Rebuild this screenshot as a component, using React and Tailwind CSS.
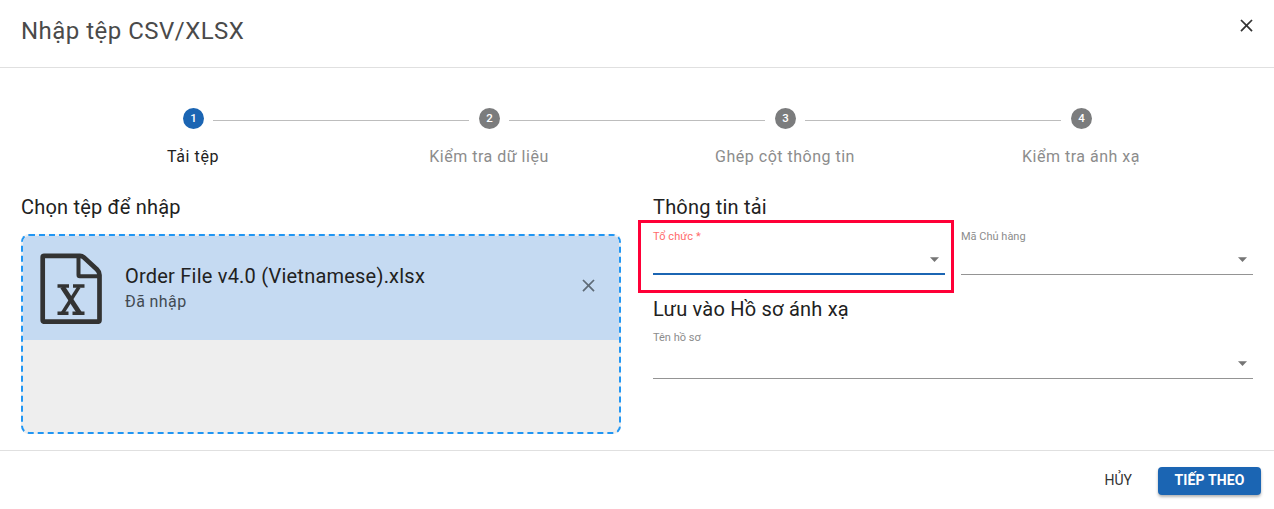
const steps = ['Tải tệp', 'Kiểm tra dữ liệu', 'Ghép cột thông tin', 'Kiểm tra ánh xạ'];

function CloseIcon({ className }) {
  return (
    <svg viewBox="0 0 24 24" className={className} fill="currentColor" aria-hidden="true">
      <path d="M19 6.41 17.59 5 12 10.59 6.41 5 5 6.41 10.59 12 5 17.59 6.41 19 12 13.41 17.59 19 19 17.59 13.41 12z" />
    </svg>
  );
}

function FileIcon() {
  return (
    <svg viewBox="0 0 62 71" className="h-[71px] w-[62px] shrink-0" fill="none" stroke="#333333" aria-hidden="true">
      <path d="M4 2.800H40Q42 2.800 44 4.500L57 16.500Q59.500 19 59.500 22V67Q59.500 68.700 58 68.700H4Q2.700 68.700 2.700 67V4Q2.700 2.800 4 2.800Z" strokeWidth="4.700" />
      <path d="M38.500 3V22Q38.500 23.300 39.800 23.300H59" strokeWidth="4" />
      <path d="M22.500 34 39.500 60" strokeWidth="5" />
      <path d="M39 34 22.500 60" strokeWidth="3.500" />
      <path d="M17.500 33H29M33 33H44.500M17.500 60.300H28.500M32.500 60.300H44.500" strokeWidth="3.500" />
    </svg>
  );
}

function Step({ number, label, active }) {
  return (
    <div className="flex w-[296px] flex-col items-center">
      <div className="flex h-[21px] w-full">
        <div className={`mt-3 mr-[10px] h-px flex-1 ${number === 1 ? '' : 'bg-[#bdbdbd]'}`} />
        <div
          className={`flex size-[21px] shrink-0 items-center justify-center rounded-full text-[11.500px] leading-none font-medium text-white ${active ? 'bg-[#1b65b3]' : 'bg-[#7b7c7d]'}`}
        >
          {number}
        </div>
        <div className={`mt-3 ml-[9px] h-px flex-1 ${number === 4 ? '' : 'bg-[#bdbdbd]'}`} />
      </div>
      <div
        className={`mt-4 text-base leading-6 whitespace-nowrap ${active ? 'font-[430] tracking-[0.600px] text-[#212121]' : 'tracking-[0.500px] text-[#8c8c8c]'}`}
      >
        {label}
      </div>
    </div>
  );
}

function Select({ label, active, className }) {
  return (
    <div className={`flex flex-col ${className}`}>
      <div className={`h-4 text-[11px] leading-4 ${active ? 'tracking-[0.100px] text-[#ff6b6b]' : 'text-[#8c8c8c]'}`}>{label}</div>
      <div
        className={`flex flex-1 items-end justify-end pr-[6px] ${active ? 'border-b-2 border-[#1b65b3] pb-[11px]' : 'border-b border-[#949494] pb-[12px]'}`}
      >
        <svg viewBox="0 0 9 5" className="h-[5px] w-[9px]" fill="#757575" aria-hidden="true">
          <path d="M0 .3h9L4.500 4.900z" />
        </svg>
      </div>
    </div>
  );
}

export default function App() {
  return (
    <div className="flex h-[509px] w-[1274px] flex-col overflow-hidden bg-white font-['Roboto',sans-serif] text-[#212121]">
      <header className="flex h-[68px] shrink-0 items-start justify-between border-b border-[#e0e0e0] pl-[21px] pr-[17px]">
        <h1 className="mt-[15px] text-2xl leading-8 tracking-[0.480px] text-[#4a4a4a]">Nhập tệp CSV/XLSX</h1>
        <button type="button" aria-label="Đóng" className="mt-[15px] text-[#333333]">
          <CloseIcon className="size-[21px]" />
        </button>
      </header>

      <main className="flex h-[382px] shrink-0 flex-col">
        <div className="flex pt-10 pl-[45px]">
          {steps.map((label, i) => (
            <Step key={label} number={i + 1} label={label} active={i === 0} />
          ))}
        </div>

        <div className="mt-[24px] flex gap-8 pl-[21px]">
          <section className="w-[600px]">
            <h2 className="text-xl leading-7 font-[450] tracking-[0.200px]">Chọn tệp để nhập</h2>
            <div className="mt-[13px] h-[200px] overflow-hidden rounded-lg border-2 border-dashed border-[#2196f3] bg-[#eeeeee]">
              <div className="flex h-[104px] items-start bg-[#c5daf2] pt-[17px] pr-[20px] pl-[17px]">
                <FileIcon />
                <div className="mt-[9px] ml-[23px] flex-1">
                  <div className="text-xl leading-7 font-[450] tracking-[0.220px]">Order File v4.0 (Vietnamese).xlsx</div>
                  <div className="text-base leading-[24px] tracking-[0.400px] text-[#424a53]">Đã nhập</div>
                </div>
                <button type="button" aria-label="Xóa tệp" className="mt-[22px] text-[#5f6b77]">
                  <CloseIcon className="size-[21px]" />
                </button>
              </div>
            </div>
          </section>

          <section className="w-[600px]">
            <h2 className="text-xl leading-7 font-[450] tracking-[0.200px]">Thông tin tải</h2>
            <div className="relative flex gap-4">
              <Select label="Tổ chức *" active className="mt-[8px] h-[46px] flex-1" />
              <Select label="Mã Chủ hàng" className="mt-[8px] h-[46px] flex-1" />
              <div className="pointer-events-none absolute -top-px -left-[15px] h-[73px] w-[316px] border-3 border-[#ff0037]" />
            </div>
            <h2 className="mt-5 text-xl leading-7 font-[450] tracking-[0.220px]">Lưu vào Hồ sơ ánh xạ</h2>
            <Select label="Tên hồ sơ" className="mt-[7px] h-[49px]" />
          </section>
        </div>
      </main>

      <footer className="flex flex-1 items-start justify-end gap-[10px] border-t border-[#e0e0e0] pt-4 pr-[13px]">
        <button type="button" className="h-7 px-4 pb-0.5 text-sm leading-[26px] font-[450] text-[#333333]">HỦY</button>
        <button type="button" className="h-7 w-[103px] rounded bg-[#1b65b3] pb-0.5 text-sm leading-[26px] font-bold tracking-[0.150px] text-white shadow-[0_2px_3px_rgba(0,0,0,0.3)]">
          TIẾP THEO
        </button>
      </footer>
    </div>
  );
}
